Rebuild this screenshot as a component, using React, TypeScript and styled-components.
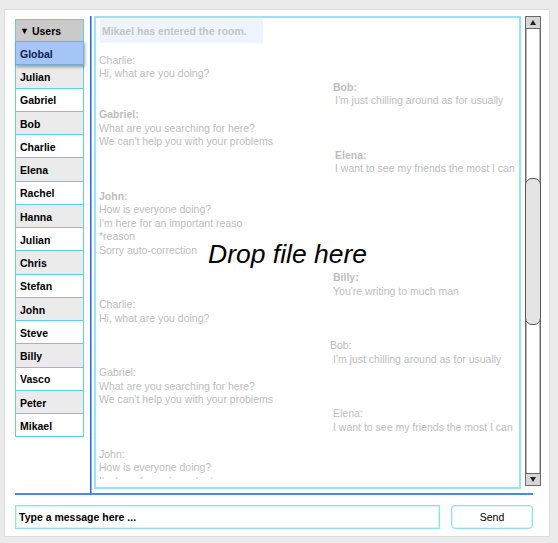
import React from 'react';
import styled, { createGlobalStyle, css } from 'styled-components';

const GlobalStyle = createGlobalStyle`
  html, body { margin: 0; padding: 0; background: #ebebeb; }
  body { font-family: "Liberation Sans", Arial, sans-serif; font-size: 10.5px; color: #000; }
  * { box-sizing: border-box; }
`;

const Page = styled.div`
  width: 558px;
  height: 543px;
  padding: 9px 0 0 4px;
`;

const Panel = styled.div`
  width: 546px;
  height: 528px;
  background: #fff;
  border: 1px solid #dcdcdc;
  padding: 6px 8px 0 10px;
  display: flex;
  flex-direction: column;
`;

const Main = styled.div`
  display: flex;
  align-items: flex-start;
  height: 477px;
`;

const UserColumn = styled.div`
  width: 75px;
  flex: none;
  padding-top: 3px;
`;

const UserList = styled.div`
  width: 69px;
  display: flex;
  flex-direction: column;
`;

const ListHeader = styled.div`
  height: 23px;
  background: #cacaca;
  border: 1px solid #5fcdef;
  padding: 1px 0 0 4px;
  display: flex;
  align-items: center;
  font-weight: bold;
`;

const Caret = styled.span`
  font-size: 9px;
  margin-right: 3px;
`;

const UserRow = styled.div<{ $alt?: boolean; $selected?: boolean }>`
  height: 24.25px;
  margin-top: -1px;
  border: 1px solid #5fcdef;
  padding: 1.5px 0 0 4px;
  display: flex;
  align-items: center;
  font-weight: bold;
  background: ${(p) => (p.$alt ? '#ebebeb' : '#fff')};
  ${(p) =>
    p.$selected &&
    css`
      position: relative;
      background: #a6c5f7;
      border-color: #6aaee0;
      color: #0c1c4c;
      box-shadow: 1px 2px 3px rgba(0, 0, 0, 0.35);
    `}
`;

const Separator = styled.div`
  width: 2px;
  align-self: stretch;
  flex: none;
  border-left: 1px solid #2f64dc;
  border-right: 1px solid #86aaee;
`;

const ChatBox = styled.div`
  position: relative;
  margin-left: 2px;
  width: 427px;
  height: 473px;
  flex: none;
  border: 2px solid #96e4f8;
  padding-bottom: 8px;
  display: flex;
  flex-direction: column;
`;

const MessageScroll = styled.div`
  flex: 1;
  overflow: hidden;
  padding: 1px 0 0 3px;
  color: #bdbdbd;
  line-height: 13.6px;
`;

const SystemNote = styled.div`
  margin-left: 1px;
  width: 163px;
  height: 24px;
  padding-left: 2px;
  background: #eef4fe;
  color: #c4c4c4;
  font-weight: bold;
  line-height: 25px;
  margin-bottom: 10.6px;
`;

const Message = styled.div<{ $indent: number; $gap?: boolean }>`
  margin-left: ${(p) => p.$indent}px;
  margin-top: ${(p) => (p.$gap ? '13.6px' : '0')};
  white-space: nowrap;
`;

const Name = styled.div<{ $bold?: boolean; $shift: number }>`
  font-weight: ${(p) => (p.$bold ? 'bold' : 'normal')};
  margin-left: ${(p) => p.$shift}px;
`;

const Line = styled.div``;

const DropHint = styled.div`
  position: absolute;
  left: 112px;
  top: 221px;
  font-size: 26.5px;
  line-height: 30px;
  font-style: italic;
  color: #000;
  white-space: nowrap;
  pointer-events: none;
`;

const Scrollbar = styled.div`
  margin-left: 4px;
  width: 16px;
  height: 470px;
  flex: none;
  border: 1px solid #6a6a6a;
  box-shadow: inset 1px 0 0 #b4b4b4, inset -1px 0 0 #b4b4b4;
  background: #fff;
  display: flex;
  flex-direction: column;
`;

const ScrollButton = styled.div<{ $down?: boolean }>`
  height: 12px;
  flex: none;
  background: #d6d6d6;
  ${(p) => (p.$down ? 'border-top' : 'border-bottom')}: 1px solid #6a6a6a;
  display: flex;
  align-items: center;
  justify-content: center;
`;

const Arrow = styled.span<{ $down?: boolean }>`
  width: 0;
  height: 0;
  border-left: 3.5px solid transparent;
  border-right: 3.5px solid transparent;
  ${(p) => (p.$down ? 'border-top' : 'border-bottom')}: 5px solid #222;
`;

const Track = styled.div`
  flex: 1;
  display: flex;
  flex-direction: column;
`;

const Thumb = styled.div<{ $offset: number; $size: number }>`
  margin-top: ${(p) => p.$offset}px;
  height: ${(p) => p.$size}px;
  margin-left: -1px;
  margin-right: -1px;
  background: #e4e4e4;
  border: 1px solid #555;
  border-radius: 7px;
`;

const HLine = styled.div`
  width: 518px;
  height: 2px;
  background: #4a88ee;
  flex: none;
`;

const InputRow = styled.div`
  margin-top: 10px;
  display: flex;
  gap: 11px;
  height: 24px;
`;

const MessageInput = styled.input`
  width: 425px;
  height: 24px;
  border: 1px solid #8fdff7;
  box-shadow: inset 0 0 0 1px #d2f3fc;
  padding: 0 0 1px 3px;
  font-family: inherit;
  font-size: 10.5px;
  font-weight: bold;
  color: #000;
  outline: none;
  &::placeholder { color: #000; opacity: 1; }
`;

const SendButton = styled.button`
  width: 82px;
  height: 24px;
  border: 1px solid #8fdff7;
  box-shadow: inset 0 0 0 1px #d8f5fc;
  border-radius: 4px;
  background: #fff;
  font-family: inherit;
  font-size: 10.5px;
  color: #000;
  padding: 0;
`;

const users = [
  'Global', 'Julian', 'Gabriel', 'Bob', 'Charlie', 'Elena', 'Rachel', 'Hanna', 'Julian',
  'Chris', 'Stefan', 'John', 'Steve', 'Billy', 'Vasco', 'Peter', 'Mikael',
];

type Msg = { name: string; lines: string[]; indent?: number; shift?: number; bold?: boolean; gap?: boolean };

const messages: Msg[] = [
  { name: 'Charlie', lines: ['Hi, what are you doing?'] },
  { name: 'Bob', lines: ["I'm just chilling around as for usually"], indent: 236, shift: -2, bold: true },
  { name: 'Gabriel', lines: ['What are you searching for here?', "We can't help you with your problems"], bold: true },
  { name: 'Elena', lines: ['I want to see my friends the most I can'], indent: 236, bold: true },
  { name: 'John', lines: ['How is everyone doing?', "I'm here for an important reaso", '*reason', 'Sorry auto-correction'], bold: true, gap: true },
  { name: 'Billy', lines: ["You're writing to much man"], indent: 234, bold: true, gap: true },
  { name: 'Charlie', lines: ['Hi, what are you doing?'] },
  { name: 'Bob', lines: ["I'm just chilling around as for usually"], indent: 234, shift: -3, gap: true },
  { name: 'Gabriel', lines: ['What are you searching for here?', "We can't help you with your problems"] },
  { name: 'Elena', lines: ['I want to see my friends the most I can'], indent: 234 },
  { name: 'John', lines: ['How is everyone doing?', "I'm here for an important reaso", '*reason', 'Sorry auto-correction'], gap: true },
];

export default function App() {
  return (
    <Page>
      <GlobalStyle />
      <Panel>
        <Main>
          <UserColumn>
            <UserList>
              <ListHeader>
                <Caret>▼</Caret>Users
              </ListHeader>
              {users.map((u, i) => (
                <UserRow key={i} $alt={i % 2 === 1} $selected={i === 0}>
                  {u}
                </UserRow>
              ))}
            </UserList>
          </UserColumn>
          <Separator />
          <ChatBox>
            <MessageScroll>
              <SystemNote>Mikael has entered the room.</SystemNote>
              {messages.map((m, i) => (
                <Message key={i} $indent={m.indent ?? 0} $gap={m.gap}>
                  <Name $bold={m.bold} $shift={m.shift ?? 0}>{m.name}:</Name>
                  {m.lines.map((l, j) => (
                    <Line key={j}>{l}</Line>
                  ))}
                </Message>
              ))}
            </MessageScroll>
            <DropHint>Drop file here</DropHint>
          </ChatBox>
          <Scrollbar>
            <ScrollButton>
              <Arrow />
            </ScrollButton>
            <Track>
              <Thumb $offset={149} $size={147} />
            </Track>
            <ScrollButton $down>
              <Arrow $down />
            </ScrollButton>
          </Scrollbar>
        </Main>
        <HLine />
        <InputRow>
          <MessageInput placeholder="Type a message here ..." />
          <SendButton>Send</SendButton>
        </InputRow>
      </Panel>
    </Page>
  );
}
